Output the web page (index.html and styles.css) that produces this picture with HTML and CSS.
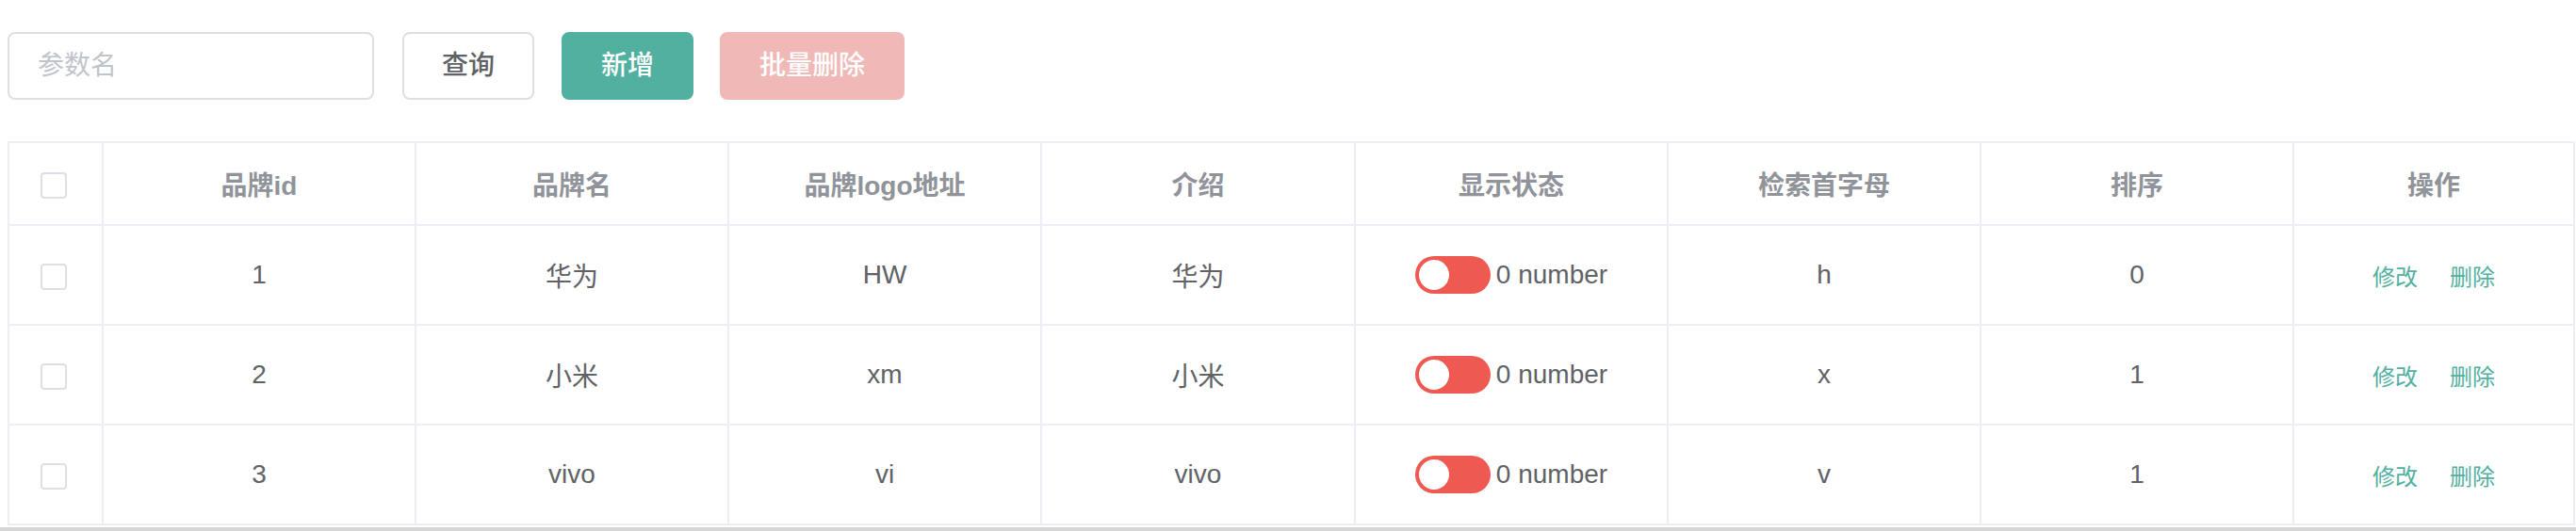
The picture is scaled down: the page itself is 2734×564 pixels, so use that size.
FILE: index.html
```html
<!DOCTYPE html>
<html>

<head>
    <meta charset="utf-8">
    <title>品牌管理</title>
    <link rel="stylesheet" href="styles.css">
</head>

<body>
    <div class="toolbar">
        <input class="search" type="text" placeholder="参数名">
        <button class="btn btn-plain">查询</button>
        <button class="btn btn-primary">新增</button>
        <button class="btn btn-danger" disabled>批量删除</button>
    </div>

    <table class="brands">
        <colgroup>
            <col class="c-check">
            <col class="c-mid">
            <col class="c-mid">
            <col class="c-mid">
            <col class="c-wide">
            <col class="c-mid">
            <col class="c-mid">
            <col class="c-mid">
            <col class="c-ops">
        </colgroup>
        <thead>
            <tr>
                <th class="chk"><span class="box"></span></th>
                <th>品牌id</th>
                <th>品牌名</th>
                <th>品牌logo地址</th>
                <th>介绍</th>
                <th>显示状态</th>
                <th>检索首字母</th>
                <th>排序</th>
                <th>操作</th>
            </tr>
        </thead>
        <tbody>
            <tr>
                <td class="chk"><span class="box"></span></td>
                <td>1</td>
                <td>华为</td>
                <td>HW</td>
                <td>华为</td>
                <td><span class="switch"><span class="knob"></span></span><span class="state">0 number</span></td>
                <td>h</td>
                <td>0</td>
                <td><a class="op">修改</a><a class="op">删除</a></td>
            </tr>
            <tr>
                <td class="chk"><span class="box"></span></td>
                <td>2</td>
                <td>小米</td>
                <td>xm</td>
                <td>小米</td>
                <td><span class="switch"><span class="knob"></span></span><span class="state">0 number</span></td>
                <td>x</td>
                <td>1</td>
                <td><a class="op">修改</a><a class="op">删除</a></td>
            </tr>
            <tr>
                <td class="chk"><span class="box"></span></td>
                <td>3</td>
                <td>vivo</td>
                <td>vi</td>
                <td>vivo</td>
                <td><span class="switch"><span class="knob"></span></span><span class="state">0 number</span></td>
                <td>v</td>
                <td>1</td>
                <td><a class="op">修改</a><a class="op">删除</a></td>
            </tr>
        </tbody>
    </table>
    <div class="scrollbar"></div>
</body>

</html>
```

FILE: styles.css
```css
body {
    margin: 0;
    background-color: #fff;
    font-family: "Liberation Sans", "Noto Sans CJK SC", sans-serif;
    color: #606266;
}

.toolbar {
    display: flex;
    align-items: center;
    padding: 34px 0 0 8px;
    height: 72px;
}

.search {
    box-sizing: border-box;
    width: 389px;
    height: 72px;
    padding: 0 30px;
    border: 2px solid #dcdfe6;
    border-radius: 8px;
    font-family: inherit;
    font-size: 28px;
    color: #606266;
    outline: none;
}
.search::placeholder {
    color: #c0c4cc;
}

.btn {
    box-sizing: border-box;
    height: 72px;
    padding: 0 40px;
    margin-left: 29px;
    border: 2px solid #dcdfe6;
    border-radius: 8px;
    font-family: inherit;
    font-size: 28px;
    font-weight: 500;
    line-height: 1;
    background-color: #fff;
    color: #606266;
}
.btn-plain {
    margin-left: 30px;
}
.btn-primary {
    background-color: #52b0a1;
    border-color: #52b0a1;
    color: #fff;
}
.btn-danger {
    margin-left: 28px;
    background-color: #f0b8b6;
    border-color: #f0b8b6;
    color: #fff;
}

.brands {
    margin: 44px 0 0 8px;
    width: 2725px;
    table-layout: fixed;
    border-collapse: separate;
    border-spacing: 0;
    border-right: 2px solid #ebeef5;
    border-bottom: 2px solid #ebeef5;
    font-size: 28px;
}
.c-check { width: 100px; }
.c-mid { width: 332px; }
.c-wide { width: 333px; }
.c-ops { width: 298px; }

.brands th,
.brands td {
    box-sizing: border-box;
    padding: 0;
    border-left: 2px solid #ebeef5;
    border-top: 2px solid #ebeef5;
    text-align: center;
    vertical-align: middle;
    white-space: nowrap;
}
.brands th {
    height: 88px;
    color: #909399;
    font-weight: bold;
}
.brands td {
    height: 106px;
}

.chk {
    padding-right: 4px !important;
}
.box {
    display: inline-block;
    box-sizing: border-box;
    width: 28px;
    height: 28px;
    border: 2px solid #dcdfe6;
    border-radius: 4px;
    vertical-align: middle;
}

.switch {
    display: inline-block;
    position: relative;
    width: 80px;
    height: 40px;
    border-radius: 20px;
    background-color: #ee5a52;
    vertical-align: middle;
}
.knob {
    position: absolute;
    left: 4px;
    top: 4px;
    width: 32px;
    height: 32px;
    border-radius: 50%;
    background-color: #fff;
}
.state {
    margin-left: 6px;
    vertical-align: middle;
}

.op {
    font-size: 24px;
    color: #52b0a1;
    margin: 0 17px;
    cursor: pointer;
}

.scrollbar {
    margin-top: 2px;
    height: 10px;
    background-color: #d5d5d5;
}
```
